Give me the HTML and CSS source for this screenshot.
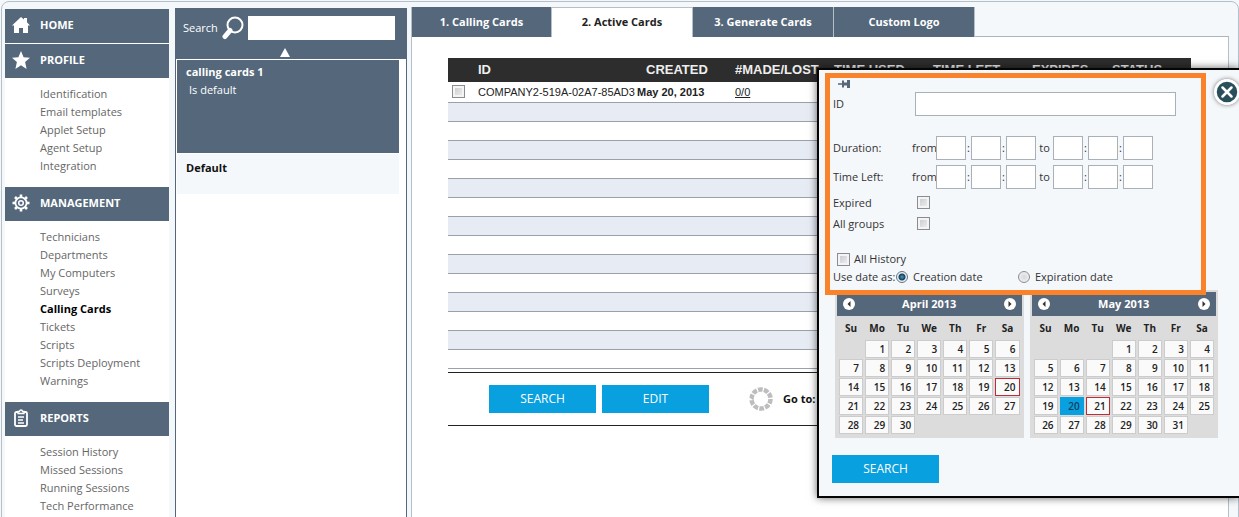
FILE: index.html
```html
<!DOCTYPE html>
<html lang="en">
<head>
<meta charset="utf-8">
<title>Calling Cards - Active Cards</title>
<link rel="stylesheet" href="styles.css">
</head>
<body>
<div class="frame">
  <nav class="sidebar">
    <a class="section" href="#home"><svg class="section-icon" viewBox="0 0 18 18"><path fill="#fff" d="M9 1l3 2.500V2h3v4.300L18 9.500h-2V17h-5v-5H7v5H2V9.500H0z"/></svg>HOME</a>
    <a class="section" href="#profile"><svg class="section-icon" viewBox="0 0 18 18"><path fill="#fff" d="M9 0l2.600 6.200 6.400.6-4.900 4.300L14.600 18 9 14.300 3.400 18l1.500-6.900L0 6.800l6.400-.6z"/></svg>PROFILE</a>
    <ul class="links">
      <li><a href="#i">Identification</a></li><li><a href="#e">Email templates</a></li><li><a href="#a">Applet Setup</a></li><li><a href="#g">Agent Setup</a></li><li><a href="#n">Integration</a></li>
    </ul>
    <a class="section" href="#management"><svg class="section-icon" viewBox="0 0 18 18"><g fill="none" stroke="#fff"><circle cx="9" cy="9" r="5.600" stroke-width="1.800"/><circle cx="9" cy="9" r="2.300" stroke-width="1.500"/><path stroke-width="2.600" d="M9 .5v3M9 14.500v3M.5 9h3M14.500 9h3M3 3l2 2M13 13l2 2M15 3l-2 2M5 13l-2 2"/></g></svg>MANAGEMENT</a>
    <ul class="links">
      <li><a href="#t">Technicians</a></li><li><a href="#d">Departments</a></li><li><a href="#m">My Computers</a></li><li><a href="#s">Surveys</a></li><li><a class="current" href="#c">Calling Cards</a></li><li><a href="#k">Tickets</a></li><li><a href="#sc">Scripts</a></li><li><a href="#sd">Scripts Deployment</a></li><li><a href="#w">Warnings</a></li>
    </ul>
    <a class="section" href="#reports"><svg class="section-icon" viewBox="0 0 18 18"><g fill="none" stroke="#fff"><rect x="3" y="3" width="12" height="14" rx="1.500" stroke-width="1.800"/><path d="M6 4.500V2.500h1.500a1.500 1.500 0 0 1 3 0H12v2z" stroke-width="1.300" fill="#54677b"/><path d="M6 8h6M6 11h5M6 14h6" stroke-width="1.300"/></g></svg>REPORTS</a>
    <ul class="links">
      <li><a href="#sh">Session History</a></li><li><a href="#ms">Missed Sessions</a></li><li><a href="#rs">Running Sessions</a></li><li><a href="#tp">Tech Performance</a></li>
    </ul>
  </nav>

  <section class="groups">
    <div class="groups-head">
      <div class="search-row">
        <label for="group-search">Search</label>
        <svg class="lens" viewBox="0 0 22 24"><circle cx="13" cy="9" r="7.500" fill="none" stroke="#fff" stroke-width="2"/><path d="M8 14.500l-5 6" stroke="#fff" stroke-width="5" stroke-linecap="round"/></svg>
        <input id="group-search" type="text">
      </div>
      <button class="sort" type="button" aria-label="Sort ascending"><svg viewBox="0 0 10 9"><path fill="#fff" d="M5 0l5 9H0z"/></svg></button>
    </div>
    <div class="group selected"><strong>calling cards 1</strong><span>Is default</span></div>
    <div class="group"><strong>Default</strong></div>
  </section>

  <main class="main">
    <div class="tabs">
      <a class="tab" href="#1">1. Calling Cards</a><a class="tab active" href="#2">2. Active Cards</a><a class="tab" href="#3">3. Generate Cards</a><a class="tab" href="#4">Custom Logo</a><span class="tab-rest"></span>
    </div>
    <div class="content">
      <table class="cards">
        <colgroup><col class="c-check"><col class="c-id"><col class="c-created"><col class="c-time"><col class="c-time"><col class="c-time"><col class="c-expires"><col></colgroup>
        <thead><tr><th></th><th>ID</th><th class="created">CREATED</th><th>#MADE/LOST</th><th>TIME USED</th><th>TIME LEFT</th><th>EXPIRES</th><th>STATUS</th></tr></thead>
        <tbody>
          <tr><td class="pick"><input type="checkbox" aria-label="Select card"></td><td>COMPANY2-519A-02A7-85AD3</td><td class="date">May 20, 2013</td><td><a href="#made">0/0</a></td><td></td><td></td><td></td><td></td></tr>
          <tr><td colspan="8"></td></tr><tr><td colspan="8"></td></tr><tr><td colspan="8"></td></tr><tr><td colspan="8"></td></tr><tr><td colspan="8"></td></tr><tr><td colspan="8"></td></tr><tr><td colspan="8"></td></tr><tr><td colspan="8"></td></tr><tr><td colspan="8"></td></tr><tr><td colspan="8"></td></tr><tr><td colspan="8"></td></tr><tr><td colspan="8"></td></tr><tr><td colspan="8"></td></tr><tr><td colspan="8"></td></tr>
        </tbody>
      </table>
      <div class="actions">
        <button class="btn" type="button">SEARCH</button>
        <button class="btn" type="button">EDIT</button>
        <svg class="spinner" viewBox="0 0 24 24"><circle cx="12" cy="12" r="9.500" fill="none" stroke="#bdbdbd" stroke-width="4.500" stroke-dasharray="4.700 1.270" pathLength="59.700"/></svg>
        <strong>Go to:</strong>
      </div>
    </div>
  </main>
</div>

<form class="popup">
  <button class="close" type="button" aria-label="Close"><svg viewBox="0 0 26 26"><circle cx="13" cy="13" r="11.500" fill="#29505a" stroke="#fff" stroke-width="2.500"/><path d="M8.500 8.500l9 9M17.500 8.500l-9 9" stroke="#fff" stroke-width="2.500" stroke-linecap="round"/></svg></button>
  <div class="filters">
    <svg class="pin" viewBox="0 0 12 8"><path fill="#54677b" d="M0 3.300h4V.5h2v2h3V0h3v8H9V5.500H6v2H4V4.700H0z"/></svg>
    <div class="field field-id"><label for="card-id">ID</label><input id="card-id" type="text"></div>
    <div class="field field-time"><span>Duration:</span><span class="times"><span class="from">from</span><input type="text" aria-label="Duration from hours"><i>:</i><input type="text" aria-label="Duration from minutes"><i>:</i><input type="text" aria-label="Duration from seconds"><span class="to">to</span><input type="text" aria-label="Duration to hours"><i>:</i><input type="text" aria-label="Duration to minutes"><i>:</i><input type="text" aria-label="Duration to seconds"></span></div>
    <div class="field field-time"><span>Time Left:</span><span class="times"><span class="from">from</span><input type="text" aria-label="Time left from hours"><i>:</i><input type="text" aria-label="Time left from minutes"><i>:</i><input type="text" aria-label="Time left from seconds"><span class="to">to</span><input type="text" aria-label="Time left to hours"><i>:</i><input type="text" aria-label="Time left to minutes"><i>:</i><input type="text" aria-label="Time left to seconds"></span></div>
    <div class="field field-check"><label for="expired">Expired</label><input id="expired" type="checkbox"></div>
    <div class="field field-check"><label for="all-groups">All groups</label><input id="all-groups" type="checkbox"></div>
    <div class="history"><input id="history" type="checkbox"><label for="history">All History</label></div>
    <div class="date-kind"><span class="date-label">Use date as:</span><label class="creation"><input type="radio" name="kind" checked>Creation date</label><label><input type="radio" name="kind">Expiration date</label></div>
  </div>
  <div class="calendars">
    <section class="calendar">
      <header><button type="button" aria-label="Previous month"><svg viewBox="0 0 12 12"><circle cx="6" cy="6" r="6" fill="#fff"/><path fill="#333" d="M7.500 3v6l-3-3z"/></svg></button><strong>April 2013</strong><button type="button" aria-label="Next month"><svg viewBox="0 0 12 12"><circle cx="6" cy="6" r="6" fill="#fff"/><path fill="#333" d="M4.500 3v6l3-3z"/></svg></button></header>
      <table>
        <thead><tr><th>Su</th><th>Mo</th><th>Tu</th><th>We</th><th>Th</th><th>Fr</th><th>Sa</th></tr></thead>
        <tbody>
          <tr><td></td><td><a href="#d">1</a></td><td><a href="#d">2</a></td><td><a href="#d">3</a></td><td><a href="#d">4</a></td><td><a href="#d">5</a></td><td><a href="#d">6</a></td></tr>
          <tr><td><a href="#d">7</a></td><td><a href="#d">8</a></td><td><a href="#d">9</a></td><td><a href="#d">10</a></td><td><a href="#d">11</a></td><td><a href="#d">12</a></td><td><a href="#d">13</a></td></tr>
          <tr><td><a href="#d">14</a></td><td><a href="#d">15</a></td><td><a href="#d">16</a></td><td><a href="#d">17</a></td><td><a href="#d">18</a></td><td><a href="#d">19</a></td><td><a class="marked" href="#d">20</a></td></tr>
          <tr><td><a href="#d">21</a></td><td><a href="#d">22</a></td><td><a href="#d">23</a></td><td><a href="#d">24</a></td><td><a href="#d">25</a></td><td><a href="#d">26</a></td><td><a href="#d">27</a></td></tr>
          <tr><td><a href="#d">28</a></td><td><a href="#d">29</a></td><td><a href="#d">30</a></td><td></td><td></td><td></td><td></td></tr>
        </tbody>
      </table>
    </section>
    <section class="calendar">
      <header><button type="button" aria-label="Previous month"><svg viewBox="0 0 12 12"><circle cx="6" cy="6" r="6" fill="#fff"/><path fill="#333" d="M7.500 3v6l-3-3z"/></svg></button><strong>May 2013</strong><button type="button" aria-label="Next month"><svg viewBox="0 0 12 12"><circle cx="6" cy="6" r="6" fill="#fff"/><path fill="#333" d="M4.500 3v6l3-3z"/></svg></button></header>
      <table>
        <thead><tr><th>Su</th><th>Mo</th><th>Tu</th><th>We</th><th>Th</th><th>Fr</th><th>Sa</th></tr></thead>
        <tbody>
          <tr><td></td><td></td><td></td><td><a href="#d">1</a></td><td><a href="#d">2</a></td><td><a href="#d">3</a></td><td><a href="#d">4</a></td></tr>
          <tr><td><a href="#d">5</a></td><td><a href="#d">6</a></td><td><a href="#d">7</a></td><td><a href="#d">8</a></td><td><a href="#d">9</a></td><td><a href="#d">10</a></td><td><a href="#d">11</a></td></tr>
          <tr><td><a href="#d">12</a></td><td><a href="#d">13</a></td><td><a href="#d">14</a></td><td><a href="#d">15</a></td><td><a href="#d">16</a></td><td><a href="#d">17</a></td><td><a href="#d">18</a></td></tr>
          <tr><td><a href="#d">19</a></td><td><a class="picked" href="#d">20</a></td><td><a class="marked" href="#d">21</a></td><td><a href="#d">22</a></td><td><a href="#d">23</a></td><td><a href="#d">24</a></td><td><a href="#d">25</a></td></tr>
          <tr><td><a href="#d">26</a></td><td><a href="#d">27</a></td><td><a href="#d">28</a></td><td><a href="#d">29</a></td><td><a href="#d">30</a></td><td><a href="#d">31</a></td><td></td></tr>
        </tbody>
      </table>
    </section>
  </div>
  <button class="btn popup-search" type="button">SEARCH</button>
</form>
</body>
</html>
```
FILE: styles.css
```css
* { box-sizing: border-box; }
body {
  margin: 0;
  height: 100vh;
  overflow: hidden;
  position: relative;
  background: #f5f8fb;
  font: 11px/18px "Open Sans", "Noto Sans", sans-serif;
  color: #333;
}
a { color: inherit; text-decoration: none; }
svg { display: block; }
button { padding: 0; border: 0; background: none; font: inherit; cursor: pointer; }
input[type="text"] {
  min-width: 0;
  height: 24px;
  margin: 0;
  padding: 0 4px;
  border: 1px solid #a9b0b8;
  background: #fff;
  font: inherit;
}
input[type="checkbox"] {
  appearance: none;
  width: 13px;
  height: 13px;
  margin: 0;
  border: 1px solid #8b8c8f;
  background: linear-gradient(135deg, #c3c6cb, #f3f3f3);
  box-shadow: inset 0 0 0 2px #f4f4f4;
}
input[type="radio"] {
  appearance: none;
  width: 12px;
  height: 12px;
  margin: 0;
  border: 1px solid #8b8c8f;
  border-radius: 50%;
  background: radial-gradient(#d5d8dc, #f7f7f7);
}
input[type="radio"]:checked {
  border-color: #647587;
  background: radial-gradient(circle, #4a9cbd 0, #173f59 3px, #e9f1f5 4px);
}

.frame {
  display: flex;
  min-height: 100vh;
  margin: 1px 0 0 1px;
  padding: 5px 9px 0 3px;
  border: 1px solid #b4bfc7;
  border-radius: 8px;
}

.sidebar { width: 164px; margin-top: 2px; flex: none; background: #fff; }
.section {
  display: flex;
  align-items: center;
  gap: 10px;
  height: 34px;
  padding: 0 0 2px 7px;
  background: #54677b;
  color: #fff;
  font-weight: 700;
}
.section + .section { margin-top: 1px; }
.section-icon { width: 18px; height: 18px; }
.links { margin: 0; padding: 7px 0 12px 35px; list-style: none; color: #666; }
.current { color: #000; font-weight: 700; }

.groups {
  width: 232px;
  flex: none;
  margin: 1px 4px 0 6px;
  border: 1px solid #54677b;
  background: #fff;
}
.groups-head { height: 50px; background: #54677b; color: #fff; }
.search-row { display: flex; align-items: center; padding: 7px 11px 0 7px; }
.search-row input { flex: 1; border: 0; }
.lens { width: 22px; height: 24px; margin: 0 4px; }
.sort { display: block; width: 10px; margin: 8px 0 0 104px; }
.group {
  min-height: 40px;
  margin: 1px 7px 0 1px;
  padding: 3px 9px;
  background: #f5f8fb;
  color: #111;
}
.group.selected { min-height: 93px; background: #54677b; color: #fff; }
.group strong, .group span { display: block; }
.group span { padding-left: 3px; }
.group:last-child { padding-top: 5px; }

.main { flex: 1; display: flex; flex-direction: column; }
.tabs { display: flex; }
.tab {
  width: 141px;
  height: 30px;
  border-right: 1px solid #b4bfc7;
  background: #54677b;
  color: #fff;
  font-weight: 700;
  line-height: 30px;
  text-align: center;
}
.tab:first-child { border-left: 1px solid #b4bfc7; }
.tab.active { background: #fff; color: #222; border-top: 1px solid #b4bfc7; line-height: 28px; }
.tab-rest { flex: 1; border-bottom: 1px solid #aab5bd; }
.content {
  flex: 1;
  padding: 21px 37px 0 36px;
  border: 1px solid #b4bfc7;
  border-width: 0 1px;
  background: #fff;
}
.cards {
  width: 100%;
  table-layout: fixed;
  border-collapse: collapse;
  font: 11px/16px "Liberation Sans", sans-serif;
  color: #222;
}
.c-check { width: 30px; }
.c-id { width: 158px; }
.c-created { width: 99px; }
.c-time { width: 99px; }
.c-expires { width: 80px; }
.cards th {
  height: 24px;
  padding: 0;
  background: #2d2d2d;
  color: #eee;
  font-size: 13px;
  text-align: left;
}
.cards .created { padding-left: 10px; }
.cards td { height: 19px; padding: 0; border-bottom: 1px solid #99a1aa; white-space: nowrap; }
.cards tbody tr:first-child td { height: 20px; }
.cards tr:nth-child(even) td { background: #e7ebf3; }
.cards td a { text-decoration: underline; }
.pick input { display: block; margin-left: 4px; }
.cards .date { padding-left: 1px; font-weight: 700; }
.actions {
  display: flex;
  align-items: center;
  height: 54px;
  margin-top: 3px;
  padding-left: 41px;
  border: 1px solid #222;
  border-width: 1px 0;
  color: #111;
}
.btn {
  width: 107px;
  height: 28px;
  margin-right: 6px;
  background: #08a0df;
  color: #fff;
  font-size: 12px;
}
.spinner { width: 24px; height: 24px; margin: 0 10px 0 34px; }

.popup {
  position: absolute;
  top: 68px;
  left: 817px;
  right: 0;
  min-height: 430px;
  padding: 3px 0 13px 6px;
  border: 2px solid #050505;
  border-right: 0;
  background: #f5f8fb;
  box-shadow: 0 0 8px rgba(0, 0, 0, .6);
}
.close {
  position: absolute;
  top: 9px;
  right: -1px;
  width: 26px;
  height: 26px;
  border-radius: 50%;
  box-shadow: 0 0 4px #777;
}
.filters {
  position: relative;
  margin-right: 33px;
  padding: 2px 3px 4px;
  border: 5px solid #f9822b;
}
.pin { width: 12px; height: 8px; margin-left: 5px; }
.field { display: grid; grid-template-columns: 80px 1fr; align-items: center; }
.field-id { margin: 4px 22px 20px 0; }
.field-id input { margin-left: 2px; }
.field-time { grid-template-columns: 79px 1fr; margin-bottom: 5px; }
.field-time + .field-time { margin-bottom: 3px; }
.times { display: flex; }
.times input { width: 30px; }
.times span, .times i { line-height: 24px; font-style: normal; }
.times i { width: 5px; text-align: center; }
.from { width: 24px; }
.to { width: 17px; text-align: center; }
.field-check { height: 21px; }
.field-check input { margin-left: 4px; }
.history { display: flex; align-items: center; gap: 4px; padding: 16px 0 0 4px; }
.date-kind { display: flex; }
.date-kind label { display: flex; align-items: center; gap: 5px; }
.date-label { width: 63px; white-space: nowrap; }
.date-kind .creation { width: 122px; }
.calendars { display: flex; gap: 6px; margin: -5px 21px 17px 10px; }
.calendar { flex: 1; padding: 2px 2px 3px; background: #dcdcdc; }
.calendar header {
  display: flex;
  align-items: center;
  justify-content: space-between;
  height: 24px;
  padding: 0 6px;
  background: #54677b;
  color: #fff;
}
.calendar header button { width: 12px; }
.calendar table { width: 100%; table-layout: fixed; border-spacing: 2px 1px; color: #222; }
.calendar th { height: 22px; padding: 0; font-size: 10px; }
.calendar td { height: 18px; padding: 0; }
.calendar td a {
  display: block;
  height: 18px;
  padding-right: 3px;
  border: 1px solid #ccc;
  background: #fafafa;
  font-size: 10px;
  font-weight: 600;
  line-height: 16px;
  text-align: right;
}
.calendar .marked { border-color: #c22b33; }
.calendar .picked { border-color: #08a0df; background: #08a0df; color: #143e5c; }
.popup-search { display: block; margin-left: 7px; }
```
